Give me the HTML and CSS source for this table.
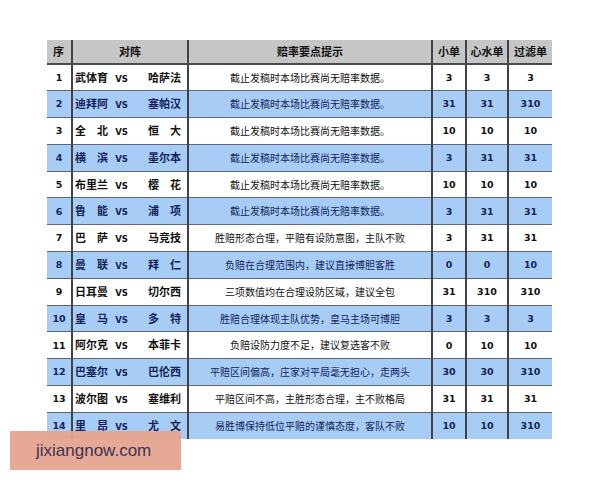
FILE: index.html
```html
<!DOCTYPE html>
<html lang="zh-CN">
<head>
<meta charset="utf-8">
<title>赔率要点提示</title>
<link rel="stylesheet" href="styles.css">
</head>
<body>
<div class="page">
  <table class="odds">
    <colgroup>
      <col class="c-no"><col class="c-match"><col class="c-tip"><col class="c-a"><col class="c-b"><col class="c-c">
    </colgroup>
    <thead>
      <tr>
        <th class="no-h">序</th>
        <th>对阵</th>
        <th>赔率要点提示</th>
        <th>小单</th>
        <th>心水单</th>
        <th>过滤单</th>
      </tr>
    </thead>
    <tbody>
      <tr class="w"><td class="num">1</td><td><div class="match"><span class="team">武体育</span><span class="vs">VS</span><span class="team away">哈萨法</span></div></td><td class="tip">截止发稿时本场比赛尚无赔率数据。</td><td class="num">3</td><td class="num">3</td><td class="num">3</td></tr>
      <tr class="b"><td class="num">2</td><td><div class="match"><span class="team">迪拜阿</span><span class="vs">VS</span><span class="team away">塞帕汉</span></div></td><td class="tip">截止发稿时本场比赛尚无赔率数据。</td><td class="num">31</td><td class="num">31</td><td class="num">310</td></tr>
      <tr class="w"><td class="num">3</td><td><div class="match"><span class="team">全北</span><span class="vs">VS</span><span class="team away">恒大</span></div></td><td class="tip">截止发稿时本场比赛尚无赔率数据。</td><td class="num">10</td><td class="num">10</td><td class="num">10</td></tr>
      <tr class="b"><td class="num">4</td><td><div class="match"><span class="team">横滨</span><span class="vs">VS</span><span class="team away">墨尔本</span></div></td><td class="tip">截止发稿时本场比赛尚无赔率数据。</td><td class="num">3</td><td class="num">31</td><td class="num">31</td></tr>
      <tr class="w"><td class="num">5</td><td><div class="match"><span class="team">布里兰</span><span class="vs">VS</span><span class="team away">樱花</span></div></td><td class="tip">截止发稿时本场比赛尚无赔率数据。</td><td class="num">10</td><td class="num">10</td><td class="num">10</td></tr>
      <tr class="b"><td class="num">6</td><td><div class="match"><span class="team">鲁能</span><span class="vs">VS</span><span class="team away">浦项</span></div></td><td class="tip">截止发稿时本场比赛尚无赔率数据。</td><td class="num">3</td><td class="num">31</td><td class="num">31</td></tr>
      <tr class="w"><td class="num">7</td><td><div class="match"><span class="team">巴萨</span><span class="vs">VS</span><span class="team away">马竞技</span></div></td><td class="tip">胜赔形态合理，平赔有设防意图，主队不败</td><td class="num">3</td><td class="num">31</td><td class="num">31</td></tr>
      <tr class="b"><td class="num">8</td><td><div class="match"><span class="team">曼联</span><span class="vs">VS</span><span class="team away">拜仁</span></div></td><td class="tip">负赔在合理范围内，建议直接博胆客胜</td><td class="num">0</td><td class="num">0</td><td class="num">10</td></tr>
      <tr class="w"><td class="num">9</td><td><div class="match"><span class="team">日耳曼</span><span class="vs">VS</span><span class="team away">切尔西</span></div></td><td class="tip">三项数值均在合理设防区域，建议全包</td><td class="num">31</td><td class="num">310</td><td class="num">310</td></tr>
      <tr class="b"><td class="num">10</td><td><div class="match"><span class="team">皇马</span><span class="vs">VS</span><span class="team away">多特</span></div></td><td class="tip">胜赔合理体现主队优势，皇马主场可博胆</td><td class="num">3</td><td class="num">3</td><td class="num">3</td></tr>
      <tr class="w"><td class="num">11</td><td><div class="match"><span class="team">阿尔克</span><span class="vs">VS</span><span class="team away">本菲卡</span></div></td><td class="tip">负赔设防力度不足，建议复选客不败</td><td class="num">0</td><td class="num">10</td><td class="num">10</td></tr>
      <tr class="b"><td class="num">12</td><td><div class="match"><span class="team">巴塞尔</span><span class="vs">VS</span><span class="team away">巴伦西</span></div></td><td class="tip">平赔区间偏高，庄家对平局毫无担心，走两头</td><td class="num">30</td><td class="num">30</td><td class="num">310</td></tr>
      <tr class="w"><td class="num">13</td><td><div class="match"><span class="team">波尔图</span><span class="vs">VS</span><span class="team away">塞维利</span></div></td><td class="tip">平赔区间不高，主胜形态合理，主不败格局</td><td class="num">31</td><td class="num">31</td><td class="num">31</td></tr>
      <tr class="b"><td class="num">14</td><td><div class="match"><span class="team">里昂</span><span class="vs">VS</span><span class="team away">尤文</span></div></td><td class="tip">易胜博保持低位平赔的谨慎态度，客队不败</td><td class="num">10</td><td class="num">10</td><td class="num">310</td></tr>
    </tbody>
  </table>
  <div class="watermark">jixiangnow.com</div>
</div>
</body>
</html>
```

FILE: styles.css
```css
html, body {
  margin: 0;
  padding: 0;
  background: #ffffff;
}

.page {
  position: relative;
  width: 600px;
  height: 480px;
  padding-top: 40px;
  box-sizing: border-box;
  font-family: "Noto Sans CJK SC", "DejaVu Sans", sans-serif;
}

.odds {
  margin-left: 47px;
  width: 505px;
  border-collapse: collapse;
  table-layout: fixed;
}

.c-no { width: 25px; }
.c-match { width: 116px; }
.c-tip { width: 244px; }
.c-a { width: 34px; }
.c-b { width: 42px; }
.c-c { width: 44px; }

.odds th,
.odds td {
  padding: 0;
  text-align: center;
  vertical-align: middle;
  border-left: 2px solid #3f4248;
  border-top: 1px solid #5e6677;
  line-height: 1;
  white-space: nowrap;
}

.odds th:first-child,
.odds td:first-child {
  border-left: none;
}

.odds thead tr {
  height: 24px;
  background: #c6c6c6;
}

.odds th {
  border-top: none;
  border-bottom: 2px solid #4a4a4a;
  font-size: 11px;
  font-weight: 700;
  color: #111111;
}

.odds th.no-h {
  text-align: left;
  padding-left: 6px;
}

.odds tbody tr {
  height: 26.8px;
}

.odds tbody tr:first-child td {
  border-top: none;
}

.w {
  background: #ffffff;
  color: #111111;
}

.b {
  background: #a7cdf6;
  color: #13235a;
}

.num {
  font-family: "DejaVu Sans", "Liberation Sans", sans-serif;
  font-weight: 700;
  font-size: 9.5px;
}

.tip {
  font-size: 10px;
  font-weight: 400;
  color: inherit;
}

.match {
  display: flex;
  align-items: baseline;
  padding-left: 2px;
  font-size: 11px;
  font-weight: 700;
  line-height: 14px;
}

.match .team {
  flex: none;
  width: 33px;
  text-align: justify;
  text-align-last: justify;
}

.match .vs {
  flex: none;
  width: 13px;
  margin-left: 7px;
  font-family: "DejaVu Sans", "Liberation Sans", sans-serif;
  font-size: 8.5px;
  font-weight: 700;
  text-align: center;
}

.match .away {
  margin-left: 20px;
}

.watermark {
  position: absolute;
  left: 10px;
  top: 431px;
  width: 171px;
  height: 39px;
  box-sizing: border-box;
  padding-left: 26px;
  background: rgba(229, 164, 143, 0.95);
  color: #3d3352;
  font-family: "Liberation Sans", "DejaVu Sans", sans-serif;
  font-size: 17px;
  line-height: 39px;
}
```
